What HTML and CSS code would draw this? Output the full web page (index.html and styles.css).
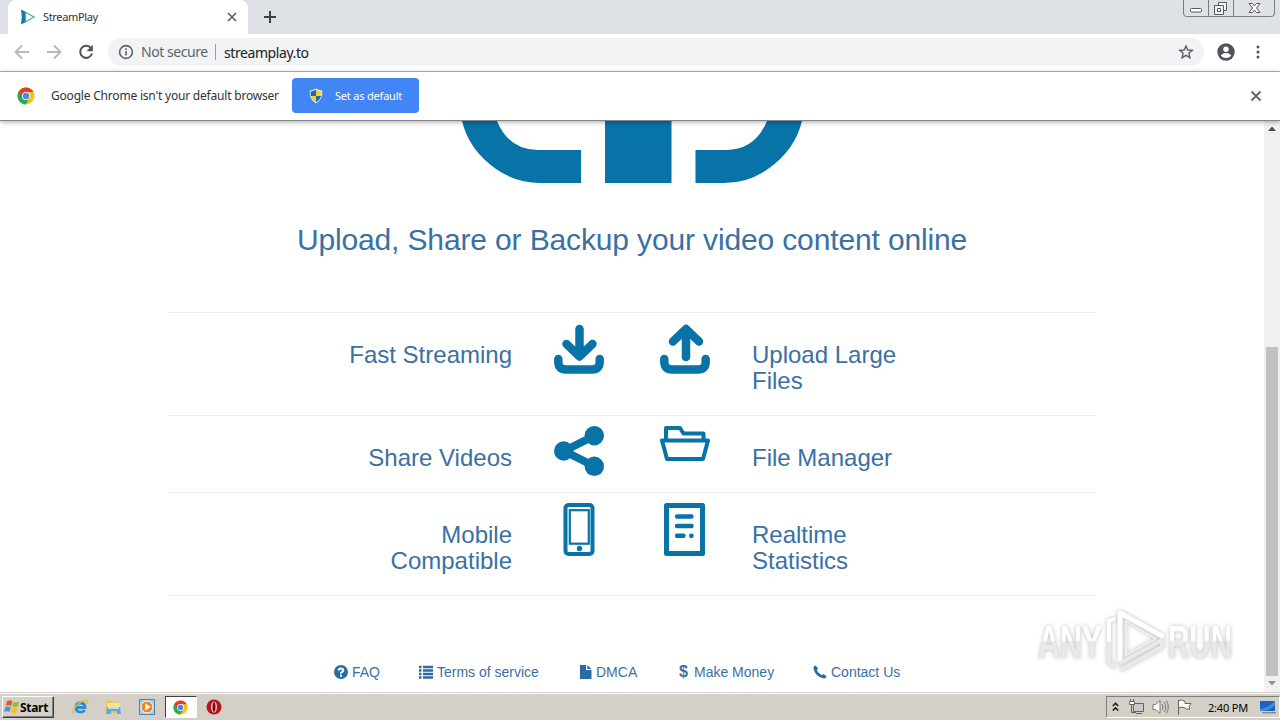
FILE: index.html
```html
<!DOCTYPE html>
<html lang="en">
<head>
    <meta charset="UTF-8">
    <meta name="viewport" content="width=device-width, initial-scale=1.0">
    <title>StreamPlay</title>
    <link rel="stylesheet" href="styles.css">
</head>
<body>
    <svg width="0" height="0" class="defs">
        <defs>
            <symbol id="chrome" viewBox="0 0 18 18">
                <circle cx="9" cy="9" r="8.5" fill="#fbc116"/>
                <path d="M9 9L1.6 4.8A8.5 8.5 0 0 0 8.6 17.5L12.8 10.8z" fill="#2da94f"/>
                <path d="M1.6 4.8A8.5 8.5 0 0 1 16.5 5H9L5.5 11z" fill="#e33b2e"/>
                <circle cx="9" cy="9" r="4.1" fill="#fff"/>
                <circle cx="9" cy="9" r="3.2" fill="#4285f4"/>
            </symbol>
        </defs>
    </svg>

    <header class="tabstrip">
        <div class="tab">
            <svg class="favicon" width="16" height="16" viewBox="0 0 16 16">
                <path d="M1 .5l4 2v11l-4 2q1.500-7.500 0-15z" fill="#147aa5"/>
                <path d="M5.500 3.200L14 8l-8.500 4.900z" fill="#fff" stroke="#49a3c5" stroke-width="1.200"/>
            </svg>
            <span class="tab-title">StreamPlay</span>
            <svg width="10" height="10" viewBox="0 0 10 10"><path d="M1 1l8 8M9 1L1 9" stroke="#5f6368" stroke-width="1.700"/></svg>
        </div>
        <svg class="new-tab" width="14" height="14" viewBox="0 0 14 14"><path d="M7 1v12M1 7h12" stroke="#3c4043" stroke-width="2"/></svg>
        <svg class="window-buttons" width="94" height="18" viewBox="0 0 94 18" fill="none" stroke="#777b82">
            <path d="M1.500 0v13q0 3.500 3 3.500h85q3 0 3-3.500V0M26.500 0v16M51.500 0v16"/>
            <rect x="8.500" y="8.500" width="11" height="3.500" rx="1" fill="#fff" stroke="#555961"/>
            <path d="M36.500 5V2.500h8v8H42M32.500 5.500h9v9h-9zM35.500 8.500h3v3h-3z" fill="#f4f5f7" stroke="#555961"/>
            <path d="M67 3.500h3.500l2 2.500 2-2.500H78L74.500 8l3.500 4.500h-3.500l-2-2.500-2 2.500H67L70.500 8z" fill="#fff" stroke="#555961"/>
        </svg>
    </header>

    <div class="toolbar">
        <svg class="nav" width="16" height="16" viewBox="0 0 16 16" fill="none" stroke="#b6b8bb" stroke-width="1.800"><path d="M15 8H2M8 1.500L1.500 8 8 14.500"/></svg>
        <svg class="nav" width="16" height="16" viewBox="0 0 16 16" fill="none" stroke="#b6b8bb" stroke-width="1.800"><path d="M1 8h13M8 1.500L14.500 8 8 14.500"/></svg>
        <svg class="nav" width="16" height="16" viewBox="0 0 16 16" fill="none" stroke="#505458" stroke-width="2"><path d="M13 4.200A6 6 0 1 0 14 9.500"/><path d="M14.800.800v6.400H8.400z" fill="#505458" stroke="none"/></svg>
        <div class="omnibox">
            <svg width="16" height="16" viewBox="0 0 16 16" fill="none" stroke="#5f6368" stroke-width="1.600"><circle cx="8" cy="8" r="6.400"/><path d="M8 7v4.500M8 4.300v1.600"/></svg>
            <span class="security">Not secure</span>
            <span class="url">streamplay.to</span>
            <svg class="star" width="16" height="16" viewBox="0 0 16 16" fill="none" stroke="#5f6368" stroke-width="1.500"><path d="M8 2l1.800 4 4.400.4-3.300 2.900 1 4.300L8 11.300l-3.900 2.300 1-4.300-3.300-2.900L6.200 6z"/></svg>
        </div>
        <svg class="profile" width="18" height="18" viewBox="0 0 18 18"><circle cx="9" cy="9" r="8.700" fill="#505458"/><circle cx="9" cy="6.300" r="2.700" fill="#fff"/><path d="M3.700 12.500q2.300-2.400 5.300-2.400t5.300 2.400Q12.300 15 9 15t-5.300-2.500z" fill="#fff"/></svg>
        <svg class="menu" width="4" height="14" viewBox="0 0 4 14" fill="#505458"><circle cx="2" cy="2" r="1.500"/><circle cx="2" cy="7" r="1.500"/><circle cx="2" cy="12" r="1.500"/></svg>
    </div>

    <div class="infobar">
        <svg width="18" height="18"><use href="#chrome"/></svg>
        <span class="infobar-text">Google Chrome isn't your default browser</span>
        <div class="default-button">
            <svg width="14" height="16" viewBox="0 0 14 16">
                <path d="M7 .5Q9.500 2.200 13.300 2.500 14 11.500 7 15.500 0 11.500.7 2.500 4.500 2.200 7 .5z" fill="#e5ebf2"/>
                <path d="M7 1.800V8h5.200q.3-2 .1-4.600Q9.200 3.100 7 1.800zM7 8H1.800Q3 12 7 14.300z" fill="#f6d02d"/>
                <path d="M7 1.800V8H1.800Q1.500 6 1.700 3.400 4.800 3.100 7 1.800zM7 8h5.200Q11 12 7 14.300z" fill="#2469ac"/>
            </svg>
            <span>Set as default</span>
        </div>
        <svg class="infobar-close" width="12" height="12" viewBox="0 0 12 12"><path d="M1.500 1.500l9 9M10.500 1.500l-9 9" stroke="#5f6368" stroke-width="1.800"/></svg>
    </div>

    <div class="viewport">
        <main class="page">
            <svg class="hero" width="344" height="62" viewBox="0 0 344 62" fill="#0873a7">
                <path d="M2 0H37Q49 29 78 29H121V62H80Q56 62 36 48Q9 29 2 0z"/>
                <path d="M145 0h66.500v62H145z"/>
                <path d="M342 0H307Q295 29 266 29H235.500V62H264Q288 62 308 48Q335 29 342 0z"/>
            </svg>
            <h2>Upload, Share or Backup your video content online</h2>

            <section class="features">
                <div class="feature-row">
                    <h3 class="left">Fast Streaming</h3>
                    <svg class="icon" width="50" height="50" viewBox="0 0 50 50" fill="none" stroke="#0873a7" stroke-width="8.500" stroke-linecap="round" stroke-linejoin="round"><path d="M4.300 35V37.500Q4.300 45.500 12 45.500H38Q45.700 45.500 45.700 37.500V35M25.500 5v27M12.500 20l13 12.500 13-12.500"/></svg>
                    <svg class="icon" width="50" height="50" viewBox="0 0 50 50" fill="none" stroke="#0873a7" stroke-width="8.500" stroke-linecap="round" stroke-linejoin="round"><path d="M4.300 35V37.500Q4.300 45.500 12 45.500H38Q45.700 45.500 45.700 37.500V35M26 33V6M13 17.500L26 5 39 17.500"/></svg>
                    <h3>Upload Large Files</h3>
                </div>
                <div class="feature-row short">
                    <h3 class="left">Share Videos</h3>
                    <svg class="icon" width="50" height="50" viewBox="0 0 50 50" fill="#0873a7"><path d="M10 25L40 10M10 25l30 15" stroke="#0873a7" stroke-width="8"/><circle cx="9.700" cy="25" r="9.700"/><circle cx="40.300" cy="9.700" r="9.700"/><circle cx="40.300" cy="40.300" r="9.700"/></svg>
                    <svg class="icon" width="50" height="36" viewBox="0 0 50 36" fill="none" stroke="#0873a7" stroke-width="4" stroke-linejoin="round"><path d="M6 13V2H20L23.500 7.500H43.500V13M2 14.500H48L43 33H7z"/></svg>
                    <h3>File Manager</h3>
                </div>
                <div class="feature-row">
                    <h3 class="left">Mobile Compatible</h3>
                    <svg class="icon" width="32" height="54" viewBox="0 0 32 54" fill="none" stroke="#0873a7"><rect x="2.500" y="2" width="27" height="49" rx="3" stroke-width="4"/><rect x="6.800" y="7.200" width="19" height="33.500" stroke-width="2.200"/><circle cx="16.500" cy="45.500" r="2.700" fill="#0873a7" stroke="none"/></svg>
                    <svg class="icon" width="42" height="54" viewBox="0 0 42 54" fill="none" stroke="#0873a7" stroke-linecap="round"><rect x="2.500" y="2.500" width="36" height="48" stroke-width="5" stroke-linejoin="round"/><path d="M13 13.500h14.500M13 23h14.500M13 32.800h6.500" stroke-width="4.400"/><path d="M27.300 32.800h.1" stroke-width="4.700"/></svg>
                    <h3>Realtime Statistics</h3>
                </div>
            </section>

            <footer>
                <a class="faq"><svg width="14" height="14" viewBox="0 0 14 14"><circle cx="7" cy="7" r="7" fill="#2a6ba4"/><path d="M4.700 5.500Q4.700 3.400 7 3.400t2.300 1.900Q9.300 6.300 8 7T7 8.600M7 9.800v2" fill="none" stroke="#fff" stroke-width="2"/></svg>FAQ</a>
                <a class="terms"><svg width="14" height="14" viewBox="0 0 14 14"><path d="M0 2h2.500M0 5.500h2.500M0 9h2.500M0 12.500h2.500M4 2h10M4 5.500h10M4 9h10M4 12.500h10" stroke="#2a6ba4" stroke-width="2.300"/></svg>Terms of service</a>
                <a class="dmca"><svg width="12" height="14" viewBox="0 0 12 14"><path d="M0 0h6v5h5.500v9H0zM7.300 0l4.200 4H7.300z" fill="#2a6ba4"/></svg>DMCA</a>
                <a class="money"><span class="dollar">$</span>Make Money</a>
                <a class="contact"><svg width="14" height="14" viewBox="0 0 14 14"><path d="M2.800.500L5 3.500 3.800 5.200Q5.500 8.500 8.800 10.200L10.500 9l3 2.200q-.5 2.500-2.800 2.300Q2 11.500.5 3.200.5.900 2.800.500z" fill="#2a6ba4"/></svg>Contact Us</a>
            </footer>
        </main>
        <div class="scrollbar">
            <svg width="8" height="5" viewBox="0 0 8 5"><path d="M0 5l4-4.500L8 5z" fill="#505050"/></svg>
            <div class="thumb"></div>
            <svg width="8" height="5" viewBox="0 0 8 5"><path d="M0 0l4 4.500L8 0z" fill="#909090"/></svg>
        </div>
        <!-- recorder watermark -->
        <svg class="watermark" width="220" height="80" viewBox="0 0 220 80">
            <defs>
                <linearGradient id="fade" x1="0" y1="24" x2="0" y2="58" gradientUnits="userSpaceOnUse">
                    <stop offset=".48" stop-color="#fff"/>
                    <stop offset=".52" stop-color="#e9e9e9"/>
                </linearGradient>
            </defs>
            <g class="watermark-text" fill="url(#fade)">
                <text x="8" y="58" textLength="64" lengthAdjust="spacingAndGlyphs">ANY</text>
                <text x="138" y="58" textLength="64" lengthAdjust="spacingAndGlyphs">RUN</text>
            </g>
            <g class="watermark-mark" fill="none" stroke-linejoin="round" stroke-linecap="round">
                <path d="M84 19l-5 2v22" stroke="#fff" stroke-width="4"/>
                <path d="M79 43v20l5 3" stroke="#e9e9e9" stroke-width="4"/>
                <path d="M90 60V13L132 36" stroke="#fff" stroke-width="5"/>
                <path d="M96 21v34l30-16z" stroke="#eeeeee" stroke-width="2"/>
                <path d="M90 63l42-23M92 69l40-22v-7" stroke="#e9e9e9" stroke-width="4"/>
            </g>
        </svg>
    </div>

    <div class="taskbar">
        <div class="start">
            <svg width="16" height="16" viewBox="0 0 16 16"><path d="M3 2q3-1.500 5.500.2L7.200 7Q5 5.500 1.700 6.800z" fill="#e8592b"/><path d="M9.500 2.800q2.500 1.300 5.500 0L13.700 7.500q-3 1.200-5.300 0z" fill="#8abf3c"/><path d="M1.400 8q3-1.300 5.500.2L5.600 13Q3 11.500 0 12.700z" fill="#409bd8"/><path d="M8 8.700q2.500 1.300 5.500 0l-1.300 4.800q-3 1.300-5.500 0z" fill="#f9bd24"/></svg>
            <span>Start</span>
        </div>
        <svg class="ie" width="17" height="16" viewBox="0 0 17 16" fill="none"><path d="M4 8.500h9Q13 4 8.500 4T4 8.500t4.500 4.600q3 0 4.200-2" stroke="#268ed4" stroke-width="2.800"/><path d="M2 14.500Q-1 12 5 6T15.500 1.500q1 .8-1 3.500" stroke="#e7b73b" stroke-width="1.400"/></svg>
        <svg class="explorer" width="17" height="16" viewBox="0 0 17 16"><path d="M1 2l5-1 2 2h6v11H1z" fill="#e6c45c"/><path d="M2 4h13v4H2z" fill="#f8e492"/><path d="M2 8h13l1 7h-4v-3H6v3H1z" fill="#62a9d4"/><path d="M3 8h11v2H3z" fill="#b8e1f4"/></svg>
        <svg class="media" width="17" height="16" viewBox="0 0 17 16"><path d="M.5.500h15v15H.5z" fill="#9fcdec" stroke="#4685bc"/><circle cx="8" cy="8" r="6" fill="#ef8721" stroke="#fff"/><path d="M6.200 4.500L11.500 8l-5.300 3.500z" fill="#fff"/></svg>
        <div class="task-active"><svg width="15" height="15"><use href="#chrome"/></svg></div>
        <svg class="opera" width="16" height="16" viewBox="0 0 16 16"><circle cx="8" cy="8" r="7.500" fill="#b5141f"/><ellipse cx="8" cy="8" rx="3" ry="5.500" fill="#f1c9ca"/><ellipse cx="8" cy="8" rx="1.500" ry="4.800" fill="#7a0b12"/></svg>
        <div class="tray">
            <svg class="chevrons" width="7" height="10" viewBox="0 0 7 10" fill="none" stroke="#111" stroke-width="1.500"><path d="M.8 4l2.700-2.700L6.200 4M.8 8.500l2.700-2.700 2.700 2.700"/></svg>
            <svg class="network" width="17" height="16" viewBox="0 0 17 16" fill="#fff" stroke="#626262"><path d="M5.500 4.500h10v8h-10zM8 14.500h6M3.500 6v7.500H8" fill="#c9c9c9"/><path d="M1.500 2.500h5v3h-5zM2.500 0v2M5.500 0v2"/></svg>
            <svg class="volume" width="17" height="16" viewBox="0 0 17 16" fill="#fff" stroke="#777"><path d="M1 5.500h2.500L8 1.500v13L3.500 10.500H1z"/><path d="M10 5q2 3 0 6M12 3q3.500 5 0 10M14.500 1.500q3.500 6.500 0 13" fill="none"/></svg>
            <svg class="flag" width="17" height="16" viewBox="0 0 17 16" fill="#fff" stroke="#666"><path d="M2.500 1.500Q6 0 9 2.500v2h6L13 7.500l1 2.500q-4 1-6-1.500-3-1-5.500.5M2.500 1v15"/></svg>
            <span class="clock">2:40 PM</span>
            <svg width="16" height="13" viewBox="0 0 16 13"><path d="M0 0h15v10H0z" fill="#1b63bd"/><path d="M0 8Q8 7 15 0v4Q10 10 0 10z" fill="#418de0"/><path d="M2 11h14v1.500H2z" fill="#878b91"/></svg>
        </div>
    </div>
</body>
</html>
```
FILE: styles.css
```css
* {
    box-sizing: border-box;
}
body {
    margin: 0;
    width: 1280px;
    height: 720px;
    overflow: hidden;
    display: flex;
    flex-direction: column;
    background-color: #ffffff;
    font-family: "Noto Sans", sans-serif;
    font-size: 13px;
    color: #303236;
}
svg {
    display: block;
    flex-shrink: 0;
}
.defs {
    position: absolute;
}
span, a {
    white-space: nowrap;
}

/* browser window */
.tabstrip {
    height: 34px;
    flex-shrink: 0;
    display: flex;
    padding: 0 4px 0 8px;
    background-color: #dee1e6;
}
.tab {
    width: 240px;
    display: flex;
    align-items: center;
    padding: 0 11px 0 12px;
    background-color: #ffffff;
    border-radius: 8px 8px 0 0;
}
.tab-title {
    flex: 1;
    margin: -2px 0 0 7px;
    font-size: 11px;
    letter-spacing: -0.35px;
}
.new-tab {
    margin: 10px 0 0 15px;
}
.window-buttons {
    margin-left: auto;
}
.toolbar {
    height: 38px;
    flex-shrink: 0;
    display: flex;
    align-items: center;
    padding: 0 20px 1px 14px;
    border-bottom: 1px solid #b5b6b8;
}
.nav {
    margin-right: 16px;
}
.omnibox {
    width: 1096px;
    height: 28px;
    margin-left: -2px;
    display: flex;
    align-items: center;
    padding: 0 10px;
    border-radius: 14px;
    background-color: #f1f3f4;
    font-size: 14px;
}
.security {
    width: 75px;
    margin-left: 7px;
    border-right: 1px solid #999c9f;
    line-height: 16px;
    color: #5f6368;
    letter-spacing: -0.45px;
}
.url {
    margin-left: 8px;
    color: #202124;
    letter-spacing: -0.42px;
}
.star {
    margin-left: auto;
}
.profile {
    margin-left: 13px;
}
.menu {
    margin-left: auto;
}
.infobar {
    height: 49px;
    flex-shrink: 0;
    display: flex;
    align-items: center;
    padding: 0 18px 1px 17px;
    border-bottom: 1px solid #858585;
    box-shadow: 0 1px 5px rgba(0, 0, 0, 0.35);
    z-index: 1;
}
.infobar-text {
    width: 241px;
    margin-left: 16px;
    font-size: 12px;
    letter-spacing: -0.2px;
}
.default-button {
    width: 127px;
    height: 35px;
    display: flex;
    align-items: center;
    padding-left: 17px;
    gap: 12px;
    border-radius: 4px;
    background-color: #4285f4;
    color: #ffffff;
    font-size: 11px;
    letter-spacing: -0.2px;
}
.infobar-close {
    margin-left: auto;
}

/* page content */
.viewport {
    position: relative;
    height: 571px;
    flex-shrink: 0;
    display: flex;
}
.page {
    width: 1264px;
    font-family: "Liberation Sans", Arial, sans-serif;
    color: #3a70a4;
}
.hero {
    margin-left: 460px;
}
h2 {
    margin: 40px 0 55px;
    font-size: 30px;
    font-weight: normal;
    letter-spacing: -0.14px;
    line-height: 34px;
    text-align: center;
}
.features {
    width: 928px;
    margin-left: 168px;
    border-top: 1px solid #eeeeee;
}
.feature-row {
    height: 103px;
    display: grid;
    grid-template-columns: 344px 134px 78px 200px;
    padding-top: 11px;
    border-bottom: 1px solid #eeeeee;
}
.feature-row.short {
    height: 77px;
    padding-top: 10px;
}
.feature-row:last-child {
    padding-top: 10px;
}
h3 {
    margin: 19px 0 0 28px;
    font-size: 24px;
    font-weight: normal;
    line-height: 26px;
}
.feature-row:first-child h3 {
    margin-top: 18px;
}
h3.left {
    margin-left: 170px;
    text-align: right;
}
.icon {
    justify-self: center;
}
footer {
    display: flex;
    margin-top: 67px;
    padding-left: 334px;
    font-size: 14px;
    line-height: 18px;
}
footer a {
    display: flex;
    align-items: center;
    gap: 4px;
}
.faq {
    width: 85px;
}
.terms {
    width: 161px;
}
.dmca {
    width: 99px;
}
.money {
    width: 134px;
}
.dollar {
    font-size: 16px;
    font-weight: bold;
    width: 11px;
}
.scrollbar {
    width: 16px;
    display: flex;
    flex-direction: column;
    align-items: center;
    padding: 5px 0 6px;
    background-color: #f1f1f1;
}
.thumb {
    width: 12px;
    height: 329px;
    margin: auto 0 5px;
    background-color: #c1c1c1;
}
.watermark {
    position: absolute;
    left: 1030px;
    top: 479px;
    overflow: visible;
}
.watermark-text {
    font-family: "Liberation Sans", Arial, sans-serif;
    font-size: 47px;
    font-weight: bold;
    filter: drop-shadow(0 0 2px #bbbbbb);
}
.watermark-mark {
    filter: drop-shadow(0 0 2px #bbbbbb);
}

/* desktop taskbar */
.taskbar {
    height: 28px;
    display: flex;
    align-items: center;
    padding: 1px 0 0 2px;
    background-color: #d4d0c8;
    border-top: 1px solid #d4d0c8;
    box-shadow: inset 0 1px #ffffff;
}
.start {
    width: 52px;
    height: 22px;
    display: flex;
    align-items: center;
    padding-left: 1px;
    border: 1px solid;
    border-color: #ffffff #404040 #404040 #ffffff;
    box-shadow: inset -1px -1px #808080;
    color: #000000;
    font-size: 12px;
    font-weight: bold;
    letter-spacing: -0.3px;
}
.ie {
    margin-left: 18px;
}
.explorer {
    margin-left: 16px;
}
.media {
    margin-left: 17px;
}
.task-active {
    width: 32px;
    height: 22px;
    margin: 0 9px 0 9px;
    display: flex;
    align-items: center;
    justify-content: center;
    padding-right: 2px;
    border: 1px solid;
    border-color: #404040 #ffffff #ffffff #404040;
    background-color: #ffffff;
}
.tray {
    width: 174px;
    height: 22px;
    margin-left: auto;
    display: flex;
    align-items: center;
    padding: 0 3px 0 5px;
    border: 1px solid;
    border-color: #808080 #ffffff #ffffff #808080;
    color: #000000;
}
.network {
    margin-left: 9px;
}
.volume, .flag {
    margin-left: 7px;
}
.clock {
    flex: 1;
    padding-left: 15px;
    font-size: 11px;
    letter-spacing: -0.2px;
}
```
